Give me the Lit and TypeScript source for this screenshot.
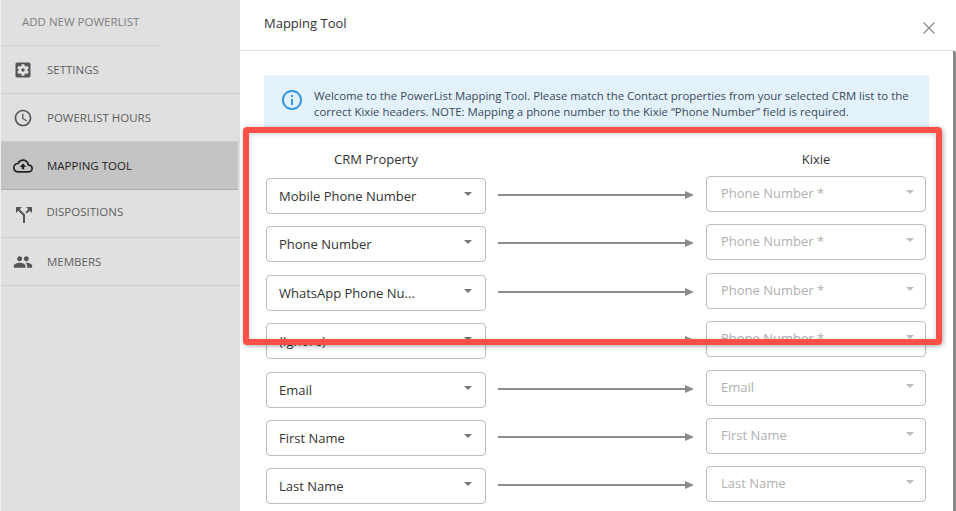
import { LitElement, html, css, svg } from "lit";
import { customElement } from "lit/decorators.js";

const ICONS = {
  settings: "M12 10c-1.1 0-2 .9-2 2s.9 2 2 2 2-.9 2-2-.9-2-2-2zm7-7H5c-1.11 0-2 .9-2 2v14c0 1.1.89 2 2 2h14c1.11 0 2-.9 2-2V5c0-1.1-.89-2-2-2zm-1.75 9c0 .23-.02.46-.05.68l1.48 1.16c.13.11.17.3.08.45l-1.4 2.42c-.09.15-.27.21-.43.15l-1.74-.7c-.36.28-.76.51-1.18.69l-.26 1.85c-.03.17-.18.3-.35.3h-2.8c-.17 0-.32-.13-.35-.29l-.26-1.85c-.43-.18-.82-.41-1.18-.69l-1.74.7c-.16.06-.34 0-.43-.15l-1.4-2.42c-.09-.15-.05-.34.08-.45l1.48-1.16c-.03-.23-.05-.46-.05-.69 0-.23.02-.46.05-.68l-1.48-1.16c-.13-.11-.17-.3-.08-.45l1.4-2.42c.09-.15.27-.21.43-.15l1.74.7c.36-.28.76-.51 1.18-.69l.26-1.85c.03-.17.18-.3.35-.3h2.8c.17 0 .32.13.35.29l.26 1.85c.43.18.82.41 1.18.69l1.74-.7c.16-.06.34 0 .43.15l1.4 2.42c.09.15.05.34-.08.45l-1.48 1.16c.03.23.05.46.05.69z",
  clock: "M11.99 2C6.47 2 2 6.48 2 12s4.47 10 9.99 10C17.52 22 22 17.52 22 12S17.52 2 11.99 2zM12 20c-4.42 0-8-3.58-8-8s3.58-8 8-8 8 3.58 8 8-3.58 8-8 8zm.5-13H11v6l5.25 3.15.75-1.23-4.5-2.67z",
  cloud: "M19.35 10.04C18.67 6.59 15.64 4 12 4 9.11 4 6.6 5.64 5.35 8.04 2.34 8.36 0 10.91 0 14c0 3.31 2.69 6 6 6h13c2.76 0 5-2.24 5-5 0-2.64-2.05-4.78-4.65-4.96zM19 18H6c-2.21 0-4-1.79-4-4 0-2.05 1.53-3.76 3.56-3.97l1.07-.11.5-.95C8.08 7.14 9.94 6 12 6c2.62 0 4.88 1.86 5.39 4.43l.3 1.5 1.53.11c1.56.1 2.78 1.41 2.78 2.96 0 1.65-1.35 3-3 3zM8 13h2.55v3h2.9v-3H16l-4-4z",
  split: "M14 4l2.29 2.29-2.88 2.88 1.42 1.42 2.88-2.88L20 10V4zm-4 0H4v6l2.29-2.29 4.71 4.7V20h2v-8.41l-5.29-5.3z",
  people: "M16 11c1.66 0 2.99-1.34 2.99-3S17.66 5 16 5c-1.66 0-3 1.34-3 3s1.34 3 3 3zm-8 0c1.66 0 2.99-1.34 2.99-3S9.66 5 8 5C6.34 5 5 6.34 5 8s1.34 3 3 3zm0 2c-2.33 0-7 1.17-7 3.5V19h14v-2.5c0-2.33-4.67-3.5-7-3.5zm8 0c-.29 0-.62.02-.97.05 1.16.84 1.97 1.97 1.97 3.45V19h6v-2.5c0-2.33-4.67-3.5-7-3.5z",
  info: "M11 17h2v-6h-2v6zm1-15C6.48 2 2 6.48 2 12s4.48 10 10 10 10-4.48 10-10S17.52 2 12 2zm0 18c-4.41 0-8-3.59-8-8s3.59-8 8-8 8 3.59 8 8-3.59 8-8 8zM11 9h2V7h-2v2z",
};

const icon = (d: string, size: number) => html`<svg class="ic" width=${size} height=${size} viewBox="0 0 24 24">${svg`<path d=${d} fill="currentColor"></path>`}</svg>`;

const NAV = [
  { label: "SETTINGS", icon: ICONS.settings, size: 20, cls: "" },
  { label: "POWERLIST HOURS", icon: ICONS.clock, size: 20, cls: "" },
  { label: "MAPPING TOOL", icon: ICONS.cloud, size: 20, cls: "active" },
  { label: "DISPOSITIONS", icon: ICONS.split, size: 24, cls: "tight" },
  { label: "MEMBERS", icon: ICONS.people, size: 20, cls: "" },
];

const ROWS = [
  ["Mobile Phone Number", "Phone Number *"],
  ["Phone Number", "Phone Number *"],
  ["WhatsApp Phone Nu...", "Phone Number *"],
  ["(Ignore)", "Phone Number *"],
  ["Email", "Email"],
  ["First Name", "First Name"],
  ["Last Name", "Last Name"],
];

@customElement("app-root")
export class AppRoot extends LitElement {
  static styles = css`
    :host { display: block; width: 956px; height: 511px; overflow: hidden; position: relative; background: #fff;
      font-family: "Open Sans", sans-serif; }
    * { box-sizing: border-box; }
    .app { display: flex; height: 100%; }
    .side { width: 240px; flex: none; background: #e0e0e0; border-left: 1px solid #ededed; }
    .add { height: 46px; width: 160px; border-bottom: 1px solid #d2d2d2; padding: 13px 0 0 21px; font-size: 11.5px; line-height: 18px; color: #7f7f7f; }
    .item { height: 48px; display: flex; align-items: center; border-bottom: 1px solid #cfcfcf; color: #5f5f5f; font-size: 11.5px; }
    .slot { width: 43px; margin-right: 3px; flex: none; display: flex; justify-content: center; color: #555; }
    .ic { display: block; flex: none; }
    .item.active { background: #c4c4c4; color: #222; width: 237px; border-bottom-color: #b0b0b0; }
    .item.active .slot { color: #222; }
    .item.tight .slot { padding-left: 3px; margin-top: 2px; margin-right: 2.5px; }
    .item.tight span:last-child { padding-bottom: 4px; }
    .main { flex: 1; min-width: 0; display: flex; flex-direction: column; position: relative; }
    .head { height: 51px; flex: none; border-bottom: 1px solid #e0e0e0; display: flex; justify-content: space-between; padding: 14px 21px 0 24px; }
    .title { font-size: 13px; line-height: 18px; color: #333; }
    .close { margin-top: 8px; color: #888; }
    .scroll { flex: 1; min-height: 0; overflow: hidden; padding: 24px 27px 0 24px; border-right: 3px solid #888; border-top-right-radius: 2px; }
    .note { height: 56px; margin-right: -3px; background: #e3f1fa; border-radius: 3px; display: flex; gap: 10px; padding: 13px 0 0 16px; color: #3a4a5a; font-size: 11.38px; line-height: 16px; }
    .note .ic { color: #2f96e8; }
    .heads { display: flex; justify-content: space-between; margin-top: 20px; padding-left: 2px; font-size: 13px; line-height: 17px; color: #333; text-align: center; }
    .heads span { width: 220px; }
    .rows { display: flex; flex-direction: column; gap: 12.4px; margin-top: 8px; padding-left: 2px; }
    .row { display: grid; grid-template-columns: 220px 220px; justify-content: space-between; height: 36px; }
    .sel { height: 36px; width: 220px; border: 1px solid #bdbdbd; border-radius: 4px; background: #fff; display: flex; align-items: center; justify-content: space-between; padding: 0 13px 0 12px; font-size: 13px; color: #333; white-space: nowrap; }
    .sel.left { margin-top: 2px; }
    .sel.right { color: #b0b0b0; padding-left: 14px; padding-right: 11px; }
    .sel.right span { padding-bottom: 2px; }
    .caret { width: 0; height: 0; border-left: 4.5px solid transparent; border-right: 4.5px solid transparent; border-top: 4.5px solid #777; margin-top: -4px; }
    .sel.right .caret { border-top-color: #bdbdbd; }
    .mid { position: relative; }
    .link { display: flex; align-items: center; position: absolute; left: 232px; top: 15px; width: 196px; }
    .line { flex: 1; height: 2px; background: #8c8c8c; }
    .head-arrow { width: 0; height: 0; border-left: 9px solid #8c8c8c; border-top: 4.5px solid transparent; border-bottom: 4.5px solid transparent; }
    .mark { position: absolute; left: 243px; top: 127px; width: 699px; height: 218px; border: 6px solid #ff4f49; border-radius: 4px; box-shadow: 1px 1px 5px rgba(0,0,0,.35), inset 0 1px 5px rgba(0,0,0,.2); pointer-events: none; }
  `;

  render() {
    return html`
      <div class="app">
        <aside class="side">
          <div class="add">ADD NEW POWERLIST</div>
          ${NAV.map((n) => html`<div class="item ${n.cls}"><span class="slot">${icon(n.icon, n.size)}</span><span>${n.label}</span></div>`)}
        </aside>
        <section class="main">
          <header class="head">
            <span class="title">Mapping Tool</span>
            <svg class="close" width="12" height="12" viewBox="0 0 12 12"><path d="M.5.5l11 11M11.5.5l-11 11" stroke="currentColor" stroke-width="1.2" fill="none"></path></svg>
          </header>
          <div class="scroll">
            <div class="note">
              ${icon(ICONS.info, 24)}
              <div>Welcome to the PowerList Mapping Tool. Please match the Contact properties from your selected CRM list to the<br />correct Kixie headers. NOTE: Mapping a phone number to the Kixie “Phone Number” field is required.</div>
            </div>
            <div class="heads"><span>CRM Property</span><span>Kixie</span></div>
            <div class="rows">
              ${ROWS.map(([a, b]) => html`
                <div class="row mid">
                  <div class="sel left"><span>${a}</span><i class="caret"></i></div>
                  <div class="link"><i class="line"></i><i class="head-arrow"></i></div>
                  <div class="sel right"><span>${b}</span><i class="caret"></i></div>
                </div>`)}
            </div>
          </div>
        </section>
      </div>
      <div class="mark"></div>
    `;
  }
}
